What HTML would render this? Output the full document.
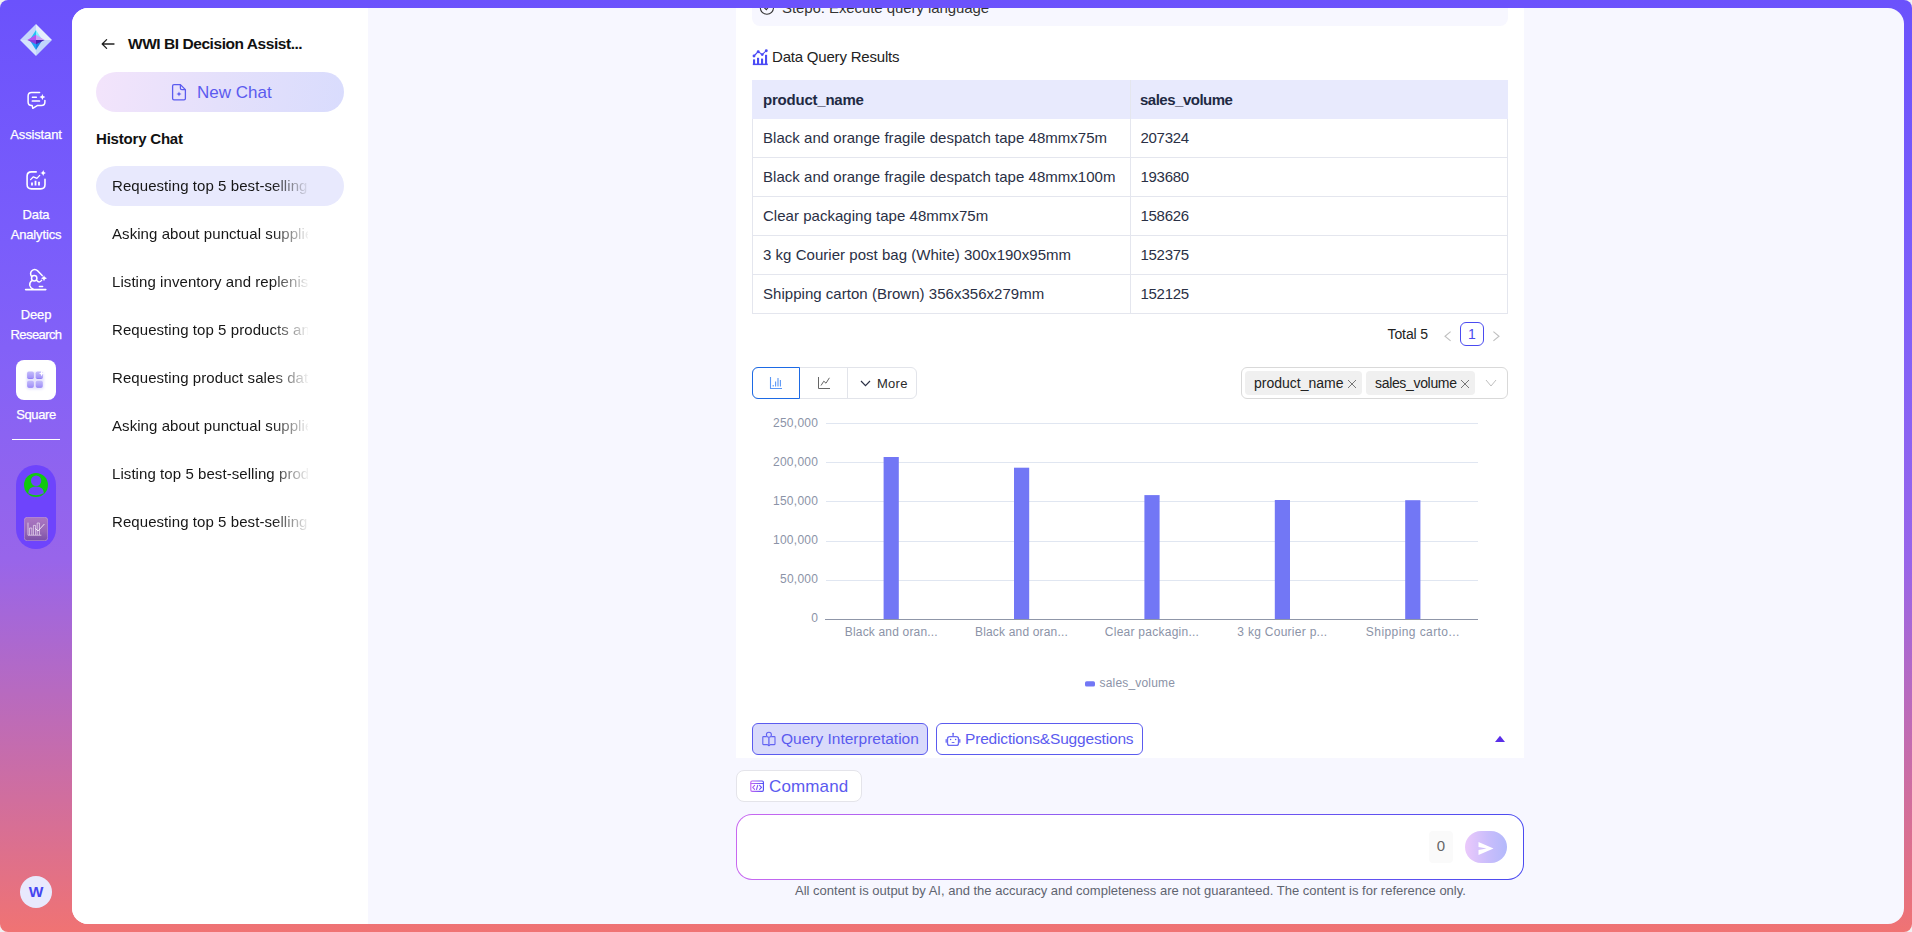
<!DOCTYPE html>
<html lang="en">
<head>
<meta charset="utf-8">
<title>WWI BI Decision Assistant</title>
<style>
*{box-sizing:border-box;margin:0;padding:0}
html,body{width:1912px;height:932px;overflow:hidden;background:#f1f1f3}
body{font-family:"Liberation Sans",sans-serif;color:#1f1f1f;position:relative}
.abs{position:absolute}
.t{position:absolute;white-space:nowrap;line-height:1}
#shell{position:absolute;left:0;top:0;width:1912px;height:932px;border-radius:8px;overflow:hidden;
 background:linear-gradient(180deg,#6b52fc 0%,#7a5dfb 26%,#8562f6 40%,#9865ea 60%,#f07373 100%)}
#panel{position:absolute;left:72px;top:8px;width:1832px;height:916px;border-radius:16px;overflow:hidden;background:#f7f7ff}
#side{position:absolute;left:0;top:0;width:296px;height:916px;background:#fff}
/* nav */
.nav{position:absolute;left:0;width:72px;text-align:center;color:#fff;font-size:13px;line-height:20px;letter-spacing:-0.15px;-webkit-text-stroke:0.25px #fff}
/* history */
.hi{position:absolute;left:24px;width:248px;height:40px;border-radius:20px}
.hi span{position:absolute;left:16px;top:0;width:196px;height:40px;line-height:40px;font-size:15px;letter-spacing:0.07px;color:#171717;white-space:nowrap;overflow:hidden;
 -webkit-mask-image:linear-gradient(90deg,#000 0,#000 160px,transparent 198px);mask-image:linear-gradient(90deg,#000 0,#000 160px,transparent 198px)}
.hi.on{background:#e8e9fd}
/* card */
#card{position:absolute;left:664px;top:0;width:788px;height:750px;background:#fff}
.th{font-size:15px;font-weight:bold;color:#1f2a44}
.td{font-size:15px;color:#2a3045;letter-spacing:0.03px}
.tn{font-size:15px;color:#2a3045;letter-spacing:-0.28px}
</style>
</head>
<body>
<div id="shell">

<!-- left nav -->
<div id="nav">
  <svg class="abs" style="left:18px;top:22px" width="36" height="36" viewBox="0 0 36 36">
    <polygon points="18,2 2,18 18,18" fill="#c6d6fb"/>
    <polygon points="18,2 34,18 18,18" fill="#e6edfd"/>
    <polygon points="2,18 18,34 18,18" fill="#d6e3fd"/>
    <polygon points="34,18 18,34 18,18" fill="#c1d5fc"/>
    <polygon points="18,8 11.6,18 18,18" fill="#22c0f5"/>
    <polygon points="18,8 24.4,18 18,18" fill="#84f0fb"/>
    <polygon points="11.6,18 18,28 18,18" fill="#1ea2f5"/>
    <polygon points="24.4,18 18,28 18,18" fill="#1b7fe6"/>
    <polygon points="18,12.8 9.3,18 18,18" fill="#b455f2"/>
    <polygon points="18,12.8 26.7,18 18,18" fill="#c9a0f8"/>
    <polygon points="9.3,18 18,22.3 18,18" fill="#8a3fe2"/>
    <polygon points="26.7,18 18,22.3 18,18" fill="#4a22b4"/>
  </svg>
  <!-- assistant icon -->
  <svg class="abs" style="left:16px;top:80px" width="40" height="40" viewBox="0 0 40 40" fill="none" stroke="#fff" stroke-width="1.5" stroke-linecap="round" stroke-linejoin="round">
    <path d="M23.6 12.6 H15.6 Q12.1 12.6 12.1 16.1 V22.1 Q12.1 25.6 15.6 25.6 H16.2 L16.8 28.3 L21.2 25.6 H25.4 Q28.9 25.6 28.9 22.1 V20.6"/>
    <path d="M16.4 17.3 H20.4"/>
    <path d="M16.4 21 H23.4" stroke-width="1.7"/>
    <path d="M26.4 13.9 Q26.7 16.7 29.4 17 Q26.7 17.3 26.4 20.1 Q26.1 17.3 23.4 17 Q26.1 16.7 26.4 13.9 Z" fill="#fff" stroke="none"/>
  </svg>
  <div class="nav" style="top:125px">Assistant</div>
  <!-- analytics icon -->
  <svg class="abs" style="left:16px;top:160px" width="40" height="40" viewBox="0 0 40 40" fill="none" stroke="#fff" stroke-width="1.6" stroke-linecap="round" stroke-linejoin="round">
    <path d="M20.2 11.9 H15.4 Q11.1 11.9 11.1 16.2 V24.6 Q11.1 28.9 15.4 28.9 H24.7 Q29 28.9 29 24.6 V19.4"/>
    <path d="M14.6 19.6 L17.4 16.8 L20.9 18.4 L23.7 15.4" stroke-width="1.3"/>
    <path d="M16 22.6 V25.4 M19.5 20.8 V25.4 M23 21.8 V25.4" stroke-width="1.8" stroke-linecap="butt"/>
    <path d="M27.2 9.8 Q27.5 12.7 30.4 13 Q27.5 13.3 27.2 16.2 Q26.9 13.3 24 13 Q26.9 12.7 27.2 9.8 Z" fill="#fff" stroke="none"/>
  </svg>
  <div class="nav" style="top:205px">Data<br>Analytics</div>
  <!-- research icon -->
  <svg class="abs" style="left:16px;top:260px" width="40" height="40" viewBox="0 0 40 40" fill="none" stroke="#fff" stroke-width="1.5" stroke-linecap="round" stroke-linejoin="round">
    <path d="M9.6 29.6 H29.8" stroke-width="1.6"/>
    <path d="M23.4 26.6 H26.6"/>
    <circle cx="18.2" cy="18.2" r="2.7"/>
    <path d="M15.6 16.6 Q13.6 13.4 15.6 11 Q18.6 8 21.8 10.9 L26.2 15.6"/>
    <path d="M25.6 20.4 Q23.2 23.4 20.8 20.6"/>
    <path d="M15.9 20.6 Q13.4 22.4 13.8 25.4 Q14.4 28 17.2 29.2"/>
    <path d="M28 15.3 Q28.3 18 31 18.3 Q28.3 18.6 28 21.3 Q27.7 18.6 25 18.3 Q27.7 18 28 15.3 Z" fill="#fff" stroke="none"/>
  </svg>
  <div class="nav" style="top:305px">Deep<br><span style="letter-spacing:-0.6px">Research</span></div>
  <!-- square -->
  <div class="abs" style="left:16px;top:360px;width:40px;height:40px;border-radius:8px;background:#fff"></div>
  <svg class="abs" style="left:16px;top:360px" width="40" height="40" viewBox="0 0 40 40">
    <defs><linearGradient id="sq" x1="0" y1="0" x2="0" y2="1"><stop offset="0" stop-color="#c3bbfb"/><stop offset="0.8" stop-color="#a596f8"/><stop offset="1" stop-color="#8673f4"/></linearGradient>
    <filter id="sqb" x="-50%" y="-50%" width="200%" height="200%"><feGaussianBlur stdDeviation="1.3"/></filter></defs>
    <rect x="10.5" y="12" width="17.5" height="17.5" rx="3" fill="#b8b0fa" opacity="0.35" filter="url(#sqb)"/>
    <rect x="11.1" y="11.6" width="6.8" height="7.4" rx="1.7" fill="url(#sq)"/>
    <rect x="19.7" y="11.6" width="7.1" height="7.4" rx="1.7" fill="url(#sq)"/>
    <rect x="11.1" y="20.8" width="6.8" height="7" rx="1.7" fill="url(#sq)"/>
    <rect x="19.7" y="20.8" width="7.1" height="7" rx="1.7" fill="url(#sq)"/>
    <path d="M25.6 10.6 Q25.8 13.2 28.4 13.5 Q25.8 13.8 25.6 16.4 Q25.4 13.8 22.8 13.5 Q25.4 13.2 25.6 10.6 Z" fill="#fff"/>
  </svg>
  <div class="nav" style="top:405px;letter-spacing:-0.4px">Square</div>
  <div class="abs" style="left:12px;top:439px;width:48px;height:1px;background:#fff"></div>
  <div class="abs" style="left:16px;top:465px;width:40px;height:83.5px;border-radius:20px;background:#6e44fc"></div>
  <svg class="abs" style="left:24px;top:473px" width="24" height="24" viewBox="0 0 24 24">
    <circle cx="12" cy="12" r="12" fill="#10c810"/>
    <circle cx="12.1" cy="7.8" r="5.2" fill="#6e44fc"/>
    <path d="M4.2 20.2 Q4.4 13.6 12 13.6 Q19.6 13.6 19.9 20.2 Q16 22.2 12 22.2 Q8 22.2 4.2 20.2 Z" fill="#6e44fc"/>
  </svg>
  <svg class="abs" style="left:24px;top:517px" width="24" height="24" viewBox="0 0 24 24">
    <defs><linearGradient id="cg" x1="0" y1="0" x2="0" y2="1"><stop offset="0" stop-color="#ab76c2"/><stop offset="0.6" stop-color="#9668b4"/><stop offset="1" stop-color="#7a50a6"/></linearGradient></defs>
    <rect x="0.3" y="0.3" width="23.4" height="23.4" rx="3" fill="url(#cg)" stroke="#c6a2d8" stroke-width="0.6"/>
    <g fill="none" stroke="#e6d6ee" stroke-width="0.8">
      <path d="M4 5.6 V18.2 H17.4"/>
      <path d="M5.6 18 V11 H7.8 V18"/>
      <path d="M9.4 18 V8.4 H11.6 V18"/>
      <path d="M13.2 18 V6 H15.4 V18"/>
      <path d="M11.4 11.4 L14 14 L20.4 7" stroke="#f4ecf8" stroke-width="0.9"/>
    </g>
  </svg>
  <div class="abs" style="left:20px;top:876px;width:32px;height:32px;border-radius:16px;background:#e8e9fd;color:#4545f0;font-weight:bold;font-size:15.5px;line-height:32px;text-align:center">W</div>
</div>

<div id="panel">
  <div id="side">
    <svg class="abs" style="left:28px;top:29px" width="16" height="14" viewBox="0 0 16 14" fill="none" stroke="#222" stroke-width="1.3" stroke-linecap="round" stroke-linejoin="round"><path d="M14 7 H2.4 M6.6 2.6 L2.2 7 L6.6 11.4"/></svg>
    <div class="t" style="left:56px;top:28px;font-size:15.5px;letter-spacing:-0.45px;font-weight:bold;color:#111">WWI BI Decision Assist...</div>
    <div class="abs" style="left:24px;top:64px;width:248px;height:40px;border-radius:20px;background:linear-gradient(100deg,#f3e4fb 0%,#e4e0fb 50%,#d9dcfd 100%)"></div>
    <svg class="abs" style="left:99px;top:75px" width="16" height="18" viewBox="0 0 16 18" fill="none" stroke="#5b5bef" stroke-width="1.3" stroke-linejoin="round"><path d="M9.4 1.6 H3 Q1.6 1.6 1.6 3 V15.4 Q1.6 16.8 3 16.8 H13 Q14.4 16.8 14.4 15.4 V6.6 Z"/><path d="M9.4 1.8 V5.2 Q9.4 6.6 10.8 6.6 H14.2"/><path d="M8 8.4 Q8.2 10.8 10.6 11 Q8.2 11.2 8 13.6 Q7.8 11.2 5.4 11 Q7.8 10.8 8 8.4 Z" fill="#5b5bef" stroke="none"/></svg>
    <div class="t" style="left:125px;top:76px;font-size:17px;color:#5b5bef">New Chat</div>
    <div class="t" style="left:24px;top:123px;font-size:15px;letter-spacing:-0.2px;font-weight:bold;color:#111">History Chat</div>
    <div class="hi on" style="top:158px"><span>Requesting top 5 best-selling products</span></div>
    <div class="hi" style="top:206px"><span>Asking about punctual suppliers</span></div>
    <div class="hi" style="top:254px"><span>Listing inventory and replenishment</span></div>
    <div class="hi" style="top:302px"><span>Requesting top 5 products and</span></div>
    <div class="hi" style="top:350px"><span>Requesting product sales data</span></div>
    <div class="hi" style="top:398px"><span>Asking about punctual suppliers</span></div>
    <div class="hi" style="top:446px"><span>Listing top 5 best-selling products</span></div>
    <div class="hi" style="top:494px"><span>Requesting top 5 best-selling products</span></div>
  </div>

  <div id="card">
    <div class="abs" style="left:16px;top:-20px;width:756px;height:38px;border-radius:8px;background:#f7f7ff"></div>
    <svg class="abs" style="left:23px;top:-8px" width="16" height="16" viewBox="0 0 16 16" fill="none" stroke="#333" stroke-width="1.1"><circle cx="7.9" cy="7.6" r="6.6"/><path d="M5 7.4 L7.3 9.6 L11 5.4"/></svg>
    <svg class="abs" style="left:16px;top:41px" width="17" height="17" viewBox="0 0 17 17" fill="#4b4bf5" stroke="none">
      <rect x="0.8" y="14.6" width="15" height="1.5"/>
      <rect x="1" y="10.4" width="2.1" height="4.8"/><rect x="5" y="8.8" width="2.1" height="6.2"/><rect x="9" y="9.6" width="2.1" height="5.6"/><rect x="13" y="5.8" width="2.1" height="9.2"/>
      <path d="M2 7 L6.2 2.6 L10.2 5.6 L14.3 1.6" fill="none" stroke="#4b4bf5" stroke-width="1.1"/>
      <circle cx="2" cy="7" r="1.45"/><circle cx="6.2" cy="2.7" r="1.45"/><circle cx="10.2" cy="5.6" r="1.45"/><circle cx="14.3" cy="1.7" r="1.45"/>
    </svg>
    <div class="t" style="left:46px;top:-8px;font-size:15px;letter-spacing:-0.08px;color:#333">Step6: Execute query language</div>
    <div class="t" style="left:36px;top:41px;font-size:15px;letter-spacing:-0.2px;color:#222">Data Query Results</div>
<div class="abs" style="left:16px;top:72px;width:756px;height:234px;border:1px solid #e4e6ee;border-top:none"></div>
    <div class="abs" style="left:16px;top:72px;width:756px;height:39px;background:#e8eafd"></div>
    <div class="abs" style="left:394px;top:72px;width:1px;height:234px;background:#e4e6ee"></div>
    <div class="t th" style="left:27px;top:84px;letter-spacing:-0.22px">product_name</div>
    <div class="t th" style="left:404px;top:84px;letter-spacing:-0.5px">sales_volume</div>
    <div class="t td" style="left:27px;top:122px">Black and orange fragile despatch tape 48mmx75m</div>
    <div class="t tn" style="left:404.5px;top:122px">207324</div>
    <div class="abs" style="left:16px;top:149px;width:756px;height:1px;background:#e4e6ee"></div>
    <div class="t td" style="left:27px;top:161px">Black and orange fragile despatch tape 48mmx100m</div>
    <div class="t tn" style="left:404.5px;top:161px">193680</div>
    <div class="abs" style="left:16px;top:188px;width:756px;height:1px;background:#e4e6ee"></div>
    <div class="t td" style="left:27px;top:200px">Clear packaging tape 48mmx75m</div>
    <div class="t tn" style="left:404.5px;top:200px">158626</div>
    <div class="abs" style="left:16px;top:227px;width:756px;height:1px;background:#e4e6ee"></div>
    <div class="t td" style="left:27px;top:239px">3 kg Courier post bag (White) 300x190x95mm</div>
    <div class="t tn" style="left:404.5px;top:239px">152375</div>
    <div class="abs" style="left:16px;top:266px;width:756px;height:1px;background:#e4e6ee"></div>
    <div class="t td" style="left:27px;top:278px">Shipping carton (Brown) 356x356x279mm</div>
    <div class="t tn" style="left:404.5px;top:278px">152125</div>
    <!-- pagination -->
    <div class="t" style="left:651.5px;top:319px;font-size:14px;letter-spacing:-0.1px;color:#222">Total 5</div>
    <svg class="abs" style="left:706px;top:322px" width="12" height="12" viewBox="0 0 12 12"><path d="M8.6 1.6 L3 6.2 L8.6 10.8" fill="none" stroke="#bfbfbf" stroke-width="1.1"/></svg>
    <div class="abs" style="left:724px;top:314px;width:24px;height:24px;border:1px solid #4b4bf0;border-radius:6px;color:#4b4bf0;font-size:14px;line-height:22px;text-align:center">1</div>
    <svg class="abs" style="left:754px;top:322px" width="12" height="12" viewBox="0 0 12 12"><path d="M3.4 1.6 L9 6.2 L3.4 10.8" fill="none" stroke="#bfbfbf" stroke-width="1.1"/></svg>
    <!-- toolbar -->
    <div class="abs" style="left:16px;top:359px;width:165px;height:32px;border:1px solid #e2e4ea;border-radius:6px"></div>
    <div class="abs" style="left:111px;top:359px;width:1px;height:32px;background:#e2e4ea"></div>
    <div class="abs" style="left:16px;top:359px;width:48px;height:32px;border:1px solid #1d6ae5;border-radius:6px 0 0 6px"></div>
    <svg class="abs" style="left:33px;top:368px" width="14" height="14" viewBox="0 0 14 14" fill="none" stroke="#5b97f5" stroke-width="1.1"><path d="M1.5 1 V12.5 H13"/><path d="M4.2 10.6 V9"/><path d="M6.6 10.6 V5.5"/><path d="M9 10.6 V2"/><path d="M11.4 10.6 V4"/></svg>
    <svg class="abs" style="left:81px;top:368px" width="14" height="14" viewBox="0 0 14 14" fill="none" stroke="#666" stroke-width="1"><path d="M1.5 1 V12.5 H13"/><path d="M4 9.5 L6.8 5.2 L9 7.2 L12.4 1.8"/></svg>
    <svg class="abs" style="left:124px;top:372px" width="11" height="7" viewBox="0 0 11 7" fill="none" stroke="#2a3045" stroke-width="1.2"><path d="M1 1 L5.5 5.6 L10 1"/></svg>
    <div class="t" style="left:141px;top:369px;font-size:13px;letter-spacing:0.25px;color:#2a2a2a">More</div>
    <!-- select -->
    <div class="abs" style="left:505px;top:359px;width:267px;height:32px;border:1px solid #d9d9d9;border-radius:6px"></div>
    <div class="abs" style="left:509px;top:363px;width:117px;height:24px;border-radius:4px;background:#f0f0f0"></div>
    <div class="abs" style="left:630px;top:363px;width:109px;height:24px;border-radius:4px;background:#f0f0f0"></div>
    <div class="t" style="left:518px;top:368px;font-size:14px;color:#222">product_name</div>
    <div class="t" style="left:639px;top:368px;font-size:14px;letter-spacing:-0.33px;color:#222">sales_volume</div>
    <svg class="abs" style="left:611px;top:371px" width="10" height="10" viewBox="0 0 10 10" stroke="#777" stroke-width="1"><path d="M1 1 L9 9 M9 1 L1 9"/></svg>
    <svg class="abs" style="left:724px;top:371px" width="10" height="10" viewBox="0 0 10 10" stroke="#777" stroke-width="1"><path d="M1 1 L9 9 M9 1 L1 9"/></svg>
    <svg class="abs" style="left:749px;top:371px" width="12" height="8" viewBox="0 0 12 8" fill="none" stroke="#bfbfbf" stroke-width="1"><path d="M1 1 L6 7 L11 1"/></svg>
    <!-- chart -->
    <svg class="abs" style="left:0;top:400px" width="788" height="300" viewBox="0 0 788 300" font-family="Liberation Sans, sans-serif" font-size="12" fill="#8b93a7">
      <line x1="90" y1="15.5" x2="742" y2="15.5" stroke="#e0e6f1" stroke-width="1"/>
      <text x="82.27" y="18.8" text-anchor="end" letter-spacing="0.27">250,000</text>
      <line x1="90" y1="54.5" x2="742" y2="54.5" stroke="#e0e6f1" stroke-width="1"/>
      <text x="82.27" y="57.8" text-anchor="end" letter-spacing="0.27">200,000</text>
      <line x1="90" y1="93.5" x2="742" y2="93.5" stroke="#e0e6f1" stroke-width="1"/>
      <text x="82.27" y="96.8" text-anchor="end" letter-spacing="0.27">150,000</text>
      <line x1="90" y1="133.5" x2="742" y2="133.5" stroke="#e0e6f1" stroke-width="1"/>
      <text x="82.27" y="135.8" text-anchor="end" letter-spacing="0.27">100,000</text>
      <line x1="90" y1="172.5" x2="742" y2="172.5" stroke="#e0e6f1" stroke-width="1"/>
      <text x="82.27" y="174.8" text-anchor="end" letter-spacing="0.27">50,000</text>
      <text x="82.27" y="213.8" text-anchor="end" letter-spacing="0.27">0</text>
      <rect x="147.6" y="49.0" width="15.2" height="162.5" fill="#7277f5"/>
      <text x="155.3" y="228" text-anchor="middle" letter-spacing="0.17">Black and oran...</text>
      <rect x="278.0" y="59.7" width="15.2" height="151.8" fill="#7277f5"/>
      <text x="285.5" y="228" text-anchor="middle" letter-spacing="0.17">Black and oran...</text>
      <rect x="408.4" y="87.1" width="15.2" height="124.4" fill="#7277f5"/>
      <text x="416.0" y="228" text-anchor="middle" letter-spacing="0.25">Clear packagin...</text>
      <rect x="538.8" y="92.0" width="15.2" height="119.5" fill="#7277f5"/>
      <text x="546.4" y="228" text-anchor="middle" letter-spacing="0.28">3 kg Courier p...</text>
      <rect x="669.2" y="92.2" width="15.2" height="119.3" fill="#7277f5"/>
      <text x="676.8" y="228" text-anchor="middle" letter-spacing="0.42">Shipping carto...</text>
      <line x1="89" y1="211.5" x2="742" y2="211.5" stroke="#8f96a8" stroke-width="1"/>
      <rect x="349" y="273.2" width="10" height="5.4" rx="1.6" fill="#7277f5"/>
      <text x="363.6" y="278.8" letter-spacing="0.17">sales_volume</text>
    </svg>
    <div class="abs" style="left:16px;top:715px;width:176px;height:32px;border:1px solid #5b5bef;border-radius:6px;background:#d9dafb"></div>
    <svg class="abs" style="left:24px;top:723px" width="18" height="16" viewBox="0 0 18 16" fill="none" stroke="#6363f2" stroke-width="1.1" stroke-linejoin="round"><circle cx="8.9" cy="3.8" r="2.5"/><path d="M6.6 5.6 H3.4 Q2.8 5.6 2.8 6.2 V13 Q2.8 13.6 3.4 13.6 H7.4 L8.9 14.7 L10.4 13.6 H14.4 Q15 13.6 15 13 V6.2 Q15 5.6 14.4 5.6 H11.2"/><path d="M8.9 6.4 V14.4" stroke-width="1.3"/></svg>
    <div class="t" style="left:45px;top:723px;font-size:15.5px;color:#5b5bef">Query Interpretation</div>
    <div class="abs" style="left:200px;top:715px;width:207px;height:32px;border:1px solid #5b5bef;border-radius:6px;background:#fff"></div>
    <svg class="abs" style="left:208px;top:723px" width="18" height="16" viewBox="0 0 18 16" fill="none" stroke="#6b6bf3" stroke-width="1.3" stroke-linecap="round"><rect x="3.5" y="5.6" width="11" height="8.8" rx="2.2"/><path d="M9.1 3 V5.4"/><path d="M2.2 8.6 V11.2 M15.8 8.6 V11.2"/><circle cx="9.1" cy="2.5" r="0.8" fill="#5b5bef" stroke="none"/><circle cx="6.6" cy="8.5" r="0.75" fill="#5b5bef" stroke="none"/><circle cx="11.6" cy="8.5" r="0.75" fill="#5b5bef" stroke="none"/><path d="M7.2 11.9 Q9.1 10 11 11.9 Z" fill="#5b5bef" stroke="none"/></svg>
    <div class="t" style="left:229px;top:723px;font-size:15.5px;letter-spacing:-0.17px;color:#5b5bef">Predictions&amp;Suggestions</div>
    <svg class="abs" style="left:758px;top:727px" width="12" height="8" viewBox="0 0 12 8"><path d="M6 0.8 L11 7 H1 Z" fill="#5a2ee8"/></svg>
  </div>

  <div class="abs" style="left:664px;top:762px;width:126px;height:32px;border:1px solid #e4e4ea;border-radius:8px;background:#fff"></div>
  <svg class="abs" style="left:676px;top:770px" width="18" height="16" viewBox="0 0 18 16" fill="none" stroke="url(#cmdg)" stroke-width="1.15" stroke-linejoin="round" stroke-linecap="round"><defs><linearGradient id="cmdg" gradientUnits="userSpaceOnUse" x1="2" y1="0" x2="16" y2="0"><stop offset="0" stop-color="#c868f5"/><stop offset="1" stop-color="#4d4df5"/></linearGradient></defs><rect x="2.8" y="3" width="12.6" height="10.3" rx="1.3"/><path d="M2.8 5.5 H15.4"/><path d="M6.6 7.4 L4.7 9.4 L6.6 11.4 M9.7 7.3 L8.5 11.5 M11.6 7.4 L13.5 9.4 L11.6 11.4"/></svg>
  <div class="t" style="left:697px;top:770px;font-size:17px;letter-spacing:0.14px;color:#5b5bef">Command</div>
  <div class="abs" style="left:664px;top:806px;width:788px;height:66px;border-radius:16px;background:linear-gradient(90deg,#c868f0 0%,#8a5cf2 45%,#4b4bf0 100%)"></div>
  <div class="abs" style="left:665px;top:807px;width:786px;height:64px;border-radius:15px;background:#fff"></div>
  <div class="abs" style="left:1357px;top:823px;width:24px;height:32px;border-radius:4px;background:#fafafa;color:#666;font-size:15px;line-height:30px;text-align:center">0</div>
  <div class="abs" style="left:1393px;top:823px;width:42px;height:32px;border-radius:16px;background:linear-gradient(90deg,#ebc9fb 0%,#c9bdfb 55%,#b3b9fb 100%)"></div>
  <svg class="abs" style="left:1405.3px;top:833px" width="18" height="15" viewBox="0 0 18 15"><path d="M1.5 1 L16.5 7.6 L1.5 14 L1.5 9 L9.5 7.6 L1.5 6 Z" fill="#fff"/></svg>
  <div class="t" style="left:723px;top:876px;font-size:13px;color:#5f6470">All content is output by AI, and the accuracy and completeness are not guaranteed. The content is for reference only.</div>
</div>
</div>
</body>
</html>
